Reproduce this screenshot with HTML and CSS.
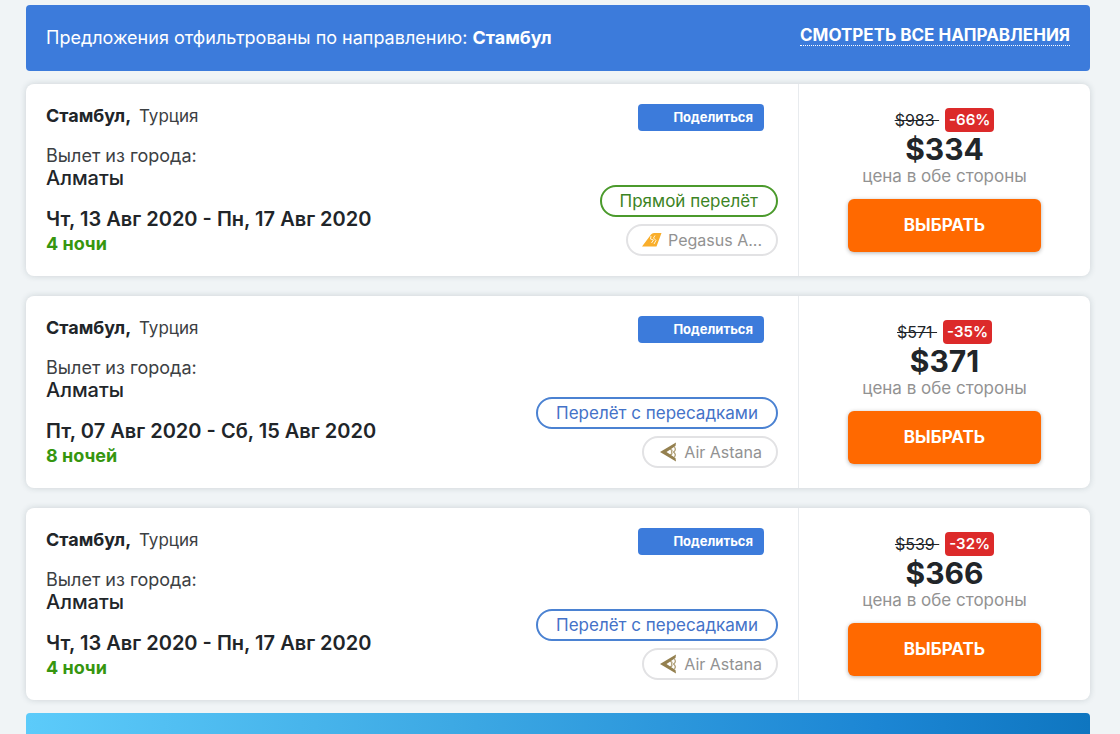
FILE: index.html
```html
<!DOCTYPE html>
<html lang="ru">
<head>
  <meta charset="UTF-8">
  <meta name="viewport" content="width=device-width, initial-scale=1.0">
  <title>Стамбул</title>
  <link rel="stylesheet" href="styles.css">
</head>
<body>

  <!-- Airline logos, used by the cards below -->
  <svg class="sprite" aria-hidden="true">
    <symbol id="pegasus" viewBox="0 0 20 16">
      <path d="M0 14.5 9 2.5Q10 1 12 1H19.5L14.5 14.5Z" fill="#f9ae2b"/>
      <path d="M9 4 8.500 7 11.500 8 9.500 11M13 3.500 11.500 6 14 8.500 12 12" fill="none" stroke="#fff3d6" stroke-width="1"/>
    </symbol>
    <symbol id="astana" viewBox="0 0 18 20">
      <path d="M1 10 17 0.500 16.500 4 7.500 10 16.500 16 17 19.500Z" fill="#94804f"/>
      <path d="M11 7.500Q14 7.500 12.500 10Q14 12.500 11 12.500M15.500 5Q17.500 8 14.500 10Q17.500 12 15.500 15" fill="none" stroke="#a8966a" stroke-width="1.200"/>
    </symbol>
  </svg>

  <main class="page">
    <div class="filter">
      <p>Предложения отфильтрованы по направлению: <b>Стамбул</b></p>
      <a href="#" class="filter-link">СМОТРЕТЬ ВСЕ НАПРАВЛЕНИЯ</a>
    </div>

    <div class="offers">
      <article class="offer">
        <div class="info">
          <h2 class="place">Стамбул, <span>Турция</span></h2>
          <p class="from">Вылет из города:</p>
          <p class="city">Алматы</p>
          <p class="dates">Чт, 13 Авг 2020 - Пн, 17 Авг 2020</p>
          <p class="nights">4 ночи</p>
        </div>
        <div class="flight">
          <button type="button" class="share">Поделиться</button>
          <span class="pill direct">Прямой перелёт</span>
          <span class="pill airline"><svg class="logo"><use href="#pegasus"/></svg>Pegasus A...</span>
        </div>
        <div class="buy">
          <p class="discount"><s>$983&nbsp;</s><span class="percent">-66%</span></p>
          <p class="price">$334</p>
          <p class="note">цена в обе стороны</p>
          <button type="button" class="select">ВЫБРАТЬ</button>
        </div>
      </article>

      <article class="offer">
        <div class="info">
          <h2 class="place">Стамбул, <span>Турция</span></h2>
          <p class="from">Вылет из города:</p>
          <p class="city">Алматы</p>
          <p class="dates">Пт, 07 Авг 2020 - Сб, 15 Авг 2020</p>
          <p class="nights">8 ночей</p>
        </div>
        <div class="flight">
          <button type="button" class="share">Поделиться</button>
          <span class="pill transfer">Перелёт с пересадками</span>
          <span class="pill airline"><svg class="logo"><use href="#astana"/></svg>Air Astana</span>
        </div>
        <div class="buy">
          <p class="discount"><s>$571&nbsp;</s><span class="percent">-35%</span></p>
          <p class="price">$371</p>
          <p class="note">цена в обе стороны</p>
          <button type="button" class="select">ВЫБРАТЬ</button>
        </div>
      </article>

      <article class="offer">
        <div class="info">
          <h2 class="place">Стамбул, <span>Турция</span></h2>
          <p class="from">Вылет из города:</p>
          <p class="city">Алматы</p>
          <p class="dates">Чт, 13 Авг 2020 - Пн, 17 Авг 2020</p>
          <p class="nights">4 ночи</p>
        </div>
        <div class="flight">
          <button type="button" class="share">Поделиться</button>
          <span class="pill transfer">Перелёт с пересадками</span>
          <span class="pill airline"><svg class="logo"><use href="#astana"/></svg>Air Astana</span>
        </div>
        <div class="buy">
          <p class="discount"><s>$539&nbsp;</s><span class="percent">-32%</span></p>
          <p class="price">$366</p>
          <p class="note">цена в обе стороны</p>
          <button type="button" class="select">ВЫБРАТЬ</button>
        </div>
      </article>
    </div>

    <div class="promo"></div>
  </main>

</body>
</html>
```
FILE: styles.css
```css
* {
  box-sizing: border-box;
}

body {
  margin: 0;
  background: #f0f4f6;
  color: #212529;
  font-family: Inter, "Open Sans", sans-serif;
  font-size: 17px;
  line-height: 22px;
}

p, h2 {
  margin: 0;
}

button {
  border: 0;
  font-family: inherit;
  color: #fff;
  cursor: pointer;
}

.sprite {
  position: absolute;
  width: 0;
  height: 0;
}

.page {
  display: flex;
  flex-direction: column;
  min-height: 100vh;
  padding: 5px 30px 0 26px;
}

/* Blue bar above the offers */
.filter {
  display: flex;
  justify-content: space-between;
  align-items: center;
  min-height: 66px;
  padding: 0 20px;
  border-radius: 4px;
  background: #3c7bdb;
  color: #fff;
  font-size: 18px;
}

.filter-link {
  margin-bottom: 6px;
  border-bottom: 1px dotted #fff;
  color: #fff;
  font-size: 17px;
  font-weight: 700;
  line-height: 20px;
  text-decoration: none;
}

.offers {
  display: flex;
  flex-direction: column;
  gap: 20px;
  margin: 13px 0;
}

.offer {
  display: flex;
  min-height: 192px;
  border-radius: 8px;
  background: #fff;
  box-shadow: 0 0 6px rgba(40, 60, 70, .18);
}

.info {
  flex: 1;
  padding: 20px;
}

.place {
  margin-bottom: 17px;
  font-size: 18px;
  font-weight: 700;
  line-height: 24px;
}

.place span {
  margin-left: 4px;
  font-size: 17px;
  font-weight: 400;
}

.from,
.place span {
  color: #3c4043;
}

.from {
  font-size: 18px;
}

.city {
  font-size: 20px;
  font-weight: 500;
}

.dates {
  margin-top: 16px;
  font-size: 20px;
  font-weight: 600;
  line-height: 28px;
}

.nights {
  color: #36960f;
  font-size: 18px;
  font-weight: 700;
}

.flight {
  display: flex;
  flex-direction: column;
  align-items: flex-end;
  gap: 7px;
  padding: 20px;
}

.share {
  height: 27px;
  margin: 0 14px auto 0;
  padding: 0 11px 2px 35px;
  border-radius: 4px;
  background: #3c7bdb;
  font-size: 13px;
  font-weight: 700;
}

.pill {
  display: flex;
  align-items: center;
  height: 32px;
  padding: 0 18px;
  border: 2px solid;
  border-radius: 16px;
}

.direct {
  border-color: #4b9a2c;
  color: #3c8424;
}

.transfer {
  border-color: #4b82d2;
  color: #4472c8;
}

.airline {
  gap: 6px;
  padding: 0 14px;
  border-color: #e2e2e4;
  color: #929292;
  font-size: 16px;
}

.logo {
  width: 20px;
  height: 20px;
}

/* Price column */
.buy {
  display: flex;
  flex-direction: column;
  align-items: center;
  width: 292px;
  padding: 24px 20px;
  border-left: 1px solid #e8ebee;
}

.discount {
  display: flex;
  align-items: center;
  gap: 6px;
  height: 24px;
  font-size: 16px;
}

.percent {
  padding: 0 4px;
  border-radius: 4px;
  background: #dc2a2a;
  color: #fff;
  font-size: 15px;
  font-weight: 600;
  line-height: 24px;
}

.price {
  font-size: 30px;
  font-weight: 700;
  line-height: 34px;
}

.note {
  color: #929292;
  line-height: 20px;
}

.select {
  width: 193px;
  height: 53px;
  margin-top: 13px;
  padding-bottom: 3px;
  border-radius: 6px;
  background: #ff6900;
  box-shadow: 0 1px 4px rgba(0, 0, 0, .3);
  font-size: 17px;
  font-weight: 700;
}

.promo {
  flex: 1;
  min-height: 21px;
  border-radius: 4px 4px 0 0;
  background: linear-gradient(90deg, #5ccbfa, #3da9e4 40%, #1c86d4 80%, #0f76c0);
}
```
